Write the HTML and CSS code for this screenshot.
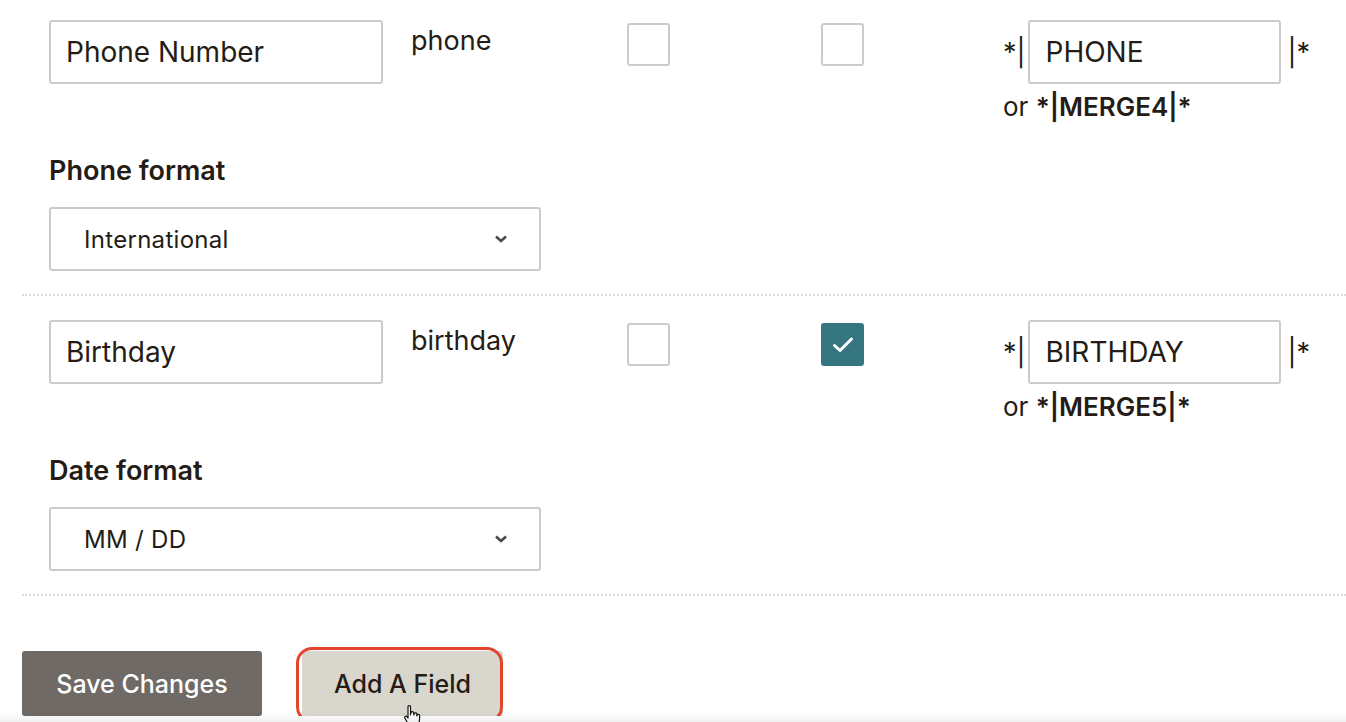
FILE: index.html
```html
<!doctype html>
<html>
<head>
    <title>List fields</title>
    <link rel="stylesheet" href="styles.css">
</head>
<body>
<div class="fields">

    <div class="field first">
        <div class="field-row">
            <input type="text" class="text-input" value="Phone Number">
            <span class="tag">phone</span>
            <span class="check"></span>
            <span class="check"></span>
            <div class="merge">
                <div class="merge-line">
                    <span class="star">*|</span>
                    <input type="text" class="merge-input" value="PHONE">
                    <span class="star">|*</span>
                </div>
                <div class="merge-alt">or <b>*|MERGE4|*</b></div>
            </div>
        </div>
        <div class="format-label">Phone format</div>
        <div class="select">
            <span>International</span>
            <svg width="14" height="10" viewBox="0 0 14 10"><path d="M2 2.5 L7 7 L12 2.5" fill="none" stroke="#4a4a4a" stroke-width="2.6"/></svg>
        </div>
    </div>

    <div class="field">
        <div class="field-row">
            <input type="text" class="text-input" value="Birthday">
            <span class="tag">birthday</span>
            <span class="check"></span>
            <span class="check checked">
                <svg width="24" height="20" viewBox="0 0 24 20"><path d="M3.5 10.5 L9 15.5 L20.5 4" fill="none" stroke="#fff" stroke-width="3" stroke-linecap="round" stroke-linejoin="round"/></svg>
            </span>
            <div class="merge">
                <div class="merge-line">
                    <span class="star">*|</span>
                    <input type="text" class="merge-input" value="BIRTHDAY">
                    <span class="star">|*</span>
                </div>
                <div class="merge-alt">or <b>*|MERGE5|*</b></div>
            </div>
        </div>
        <div class="format-label">Date format</div>
        <div class="select">
            <span>MM / DD</span>
            <svg width="14" height="10" viewBox="0 0 14 10"><path d="M2 2.5 L7 7 L12 2.5" fill="none" stroke="#4a4a4a" stroke-width="2.6"/></svg>
        </div>
    </div>

</div>

<div class="actions">
    <button class="btn btn-save">Save Changes</button>
    <button class="btn btn-add">Add A Field</button>
</div>

<svg class="cursor" width="26" height="26" viewBox="0 0 26 26">
    <path d="M6 2.5 C6 1.2 8.5 1.2 8.5 2.5 L8.5 11 L9 8.5 C9.3 7.3 11.5 7.3 11.6 8.7 L11.8 11 L12.3 9.5 C12.7 8.4 14.8 8.6 14.8 10 L14.9 12 L15.4 11 C15.9 10 17.8 10.3 17.7 11.8 L17.4 17 C17.2 20 15.5 22 13 22.5 L10 22.5 C8 22.3 6.8 21 5.8 19.3 L2.8 14 C2.2 12.8 3.8 11.6 4.9 12.6 L6 14 Z" fill="#fff" stroke="#111" stroke-width="1.2" stroke-linejoin="round"/>
</svg>
<div class="bottom-shade"></div>
</body>
</html>
```

FILE: styles.css
```css
body {
    margin: 0;
    background: #fff;
    color: #241c15;
    font-family: Inter, "Noto Sans", sans-serif;
    overflow: hidden;
}
.fields {
    margin-left: 22px;
}
.field {
    padding: 24px 0 23px 27px;
    border-bottom: 2px dotted #dcdcdc;
}
.field.first {
    padding-top: 20px;
}
.field-row {
    display: grid;
    grid-template-columns: 362px 216px 194px 182px 1fr;
    align-items: start;
}
.text-input, .merge-input {
    box-sizing: border-box;
    height: 64px;
    border: 2px solid #cbcbcb;
    border-radius: 3px;
    font-family: Inter, sans-serif;
    font-size: 28px;
    color: #241c15;
    padding: 0 15px;
    margin: 0;
    outline: none;
}
.text-input {
    width: 334px;
}
.tag {
    font-size: 27px;
    line-height: 42px;
}
.check {
    box-sizing: border-box;
    width: 43px;
    height: 43px;
    margin-top: 3px;
    border: 2px solid #cbcbcb;
    border-radius: 3px;
    display: flex;
    align-items: center;
    justify-content: center;
}
.check.checked {
    background: #35757f;
    border-color: #35757f;
}
.merge-line {
    display: flex;
    align-items: center;
}
.star {
    font-size: 27px;
}
.merge-input {
    width: 253px;
    margin: 0 7px 0 2px;
    padding: 0 16px;
}
.merge-alt {
    font-size: 26px;
    line-height: 34px;
    margin-top: 6px;
}
.merge-alt b {
    font-weight: 600;
}
.format-label {
    font-size: 27px;
    font-weight: 600;
    line-height: 40px;
    margin-top: 27px;
}
.select {
    box-sizing: border-box;
    width: 492px;
    height: 64px;
    margin-top: 16px;
    border: 2px solid #cbcbcb;
    border-radius: 3px;
    display: flex;
    align-items: center;
    justify-content: space-between;
    padding: 0 31px 0 33px;
    font-size: 24px;
    letter-spacing: 0.3px;
}
.actions {
    display: flex;
    gap: 40px;
    margin: 55px 0 0 22px;
}
.btn {
    height: 65px;
    border: none;
    border-radius: 3px;
    font-family: Inter, sans-serif;
    font-size: 25px;
    font-weight: 500;
    cursor: pointer;
}
.btn-save {
    width: 240px;
    background: #6f6a66;
    color: #fff;
}
.btn-add {
    position: relative;
    width: 201px;
    background: #d9d6ce;
    color: #241c15;
    padding-right: 6px;
}
.btn-add::after {
    content: "";
    position: absolute;
    left: -6px;
    top: -4px;
    width: 201px;
    height: 70px;
    border: 3px solid #e5442c;
    border-radius: 16px;
}
.cursor {
    position: absolute;
    left: 402px;
    top: 704px;
}
.bottom-shade {
    position: fixed;
    left: 0;
    right: 0;
    bottom: 0;
    height: 10px;
    background: linear-gradient(to bottom, rgba(0,0,0,0), rgba(0,0,0,0.06));
    pointer-events: none;
}
```
